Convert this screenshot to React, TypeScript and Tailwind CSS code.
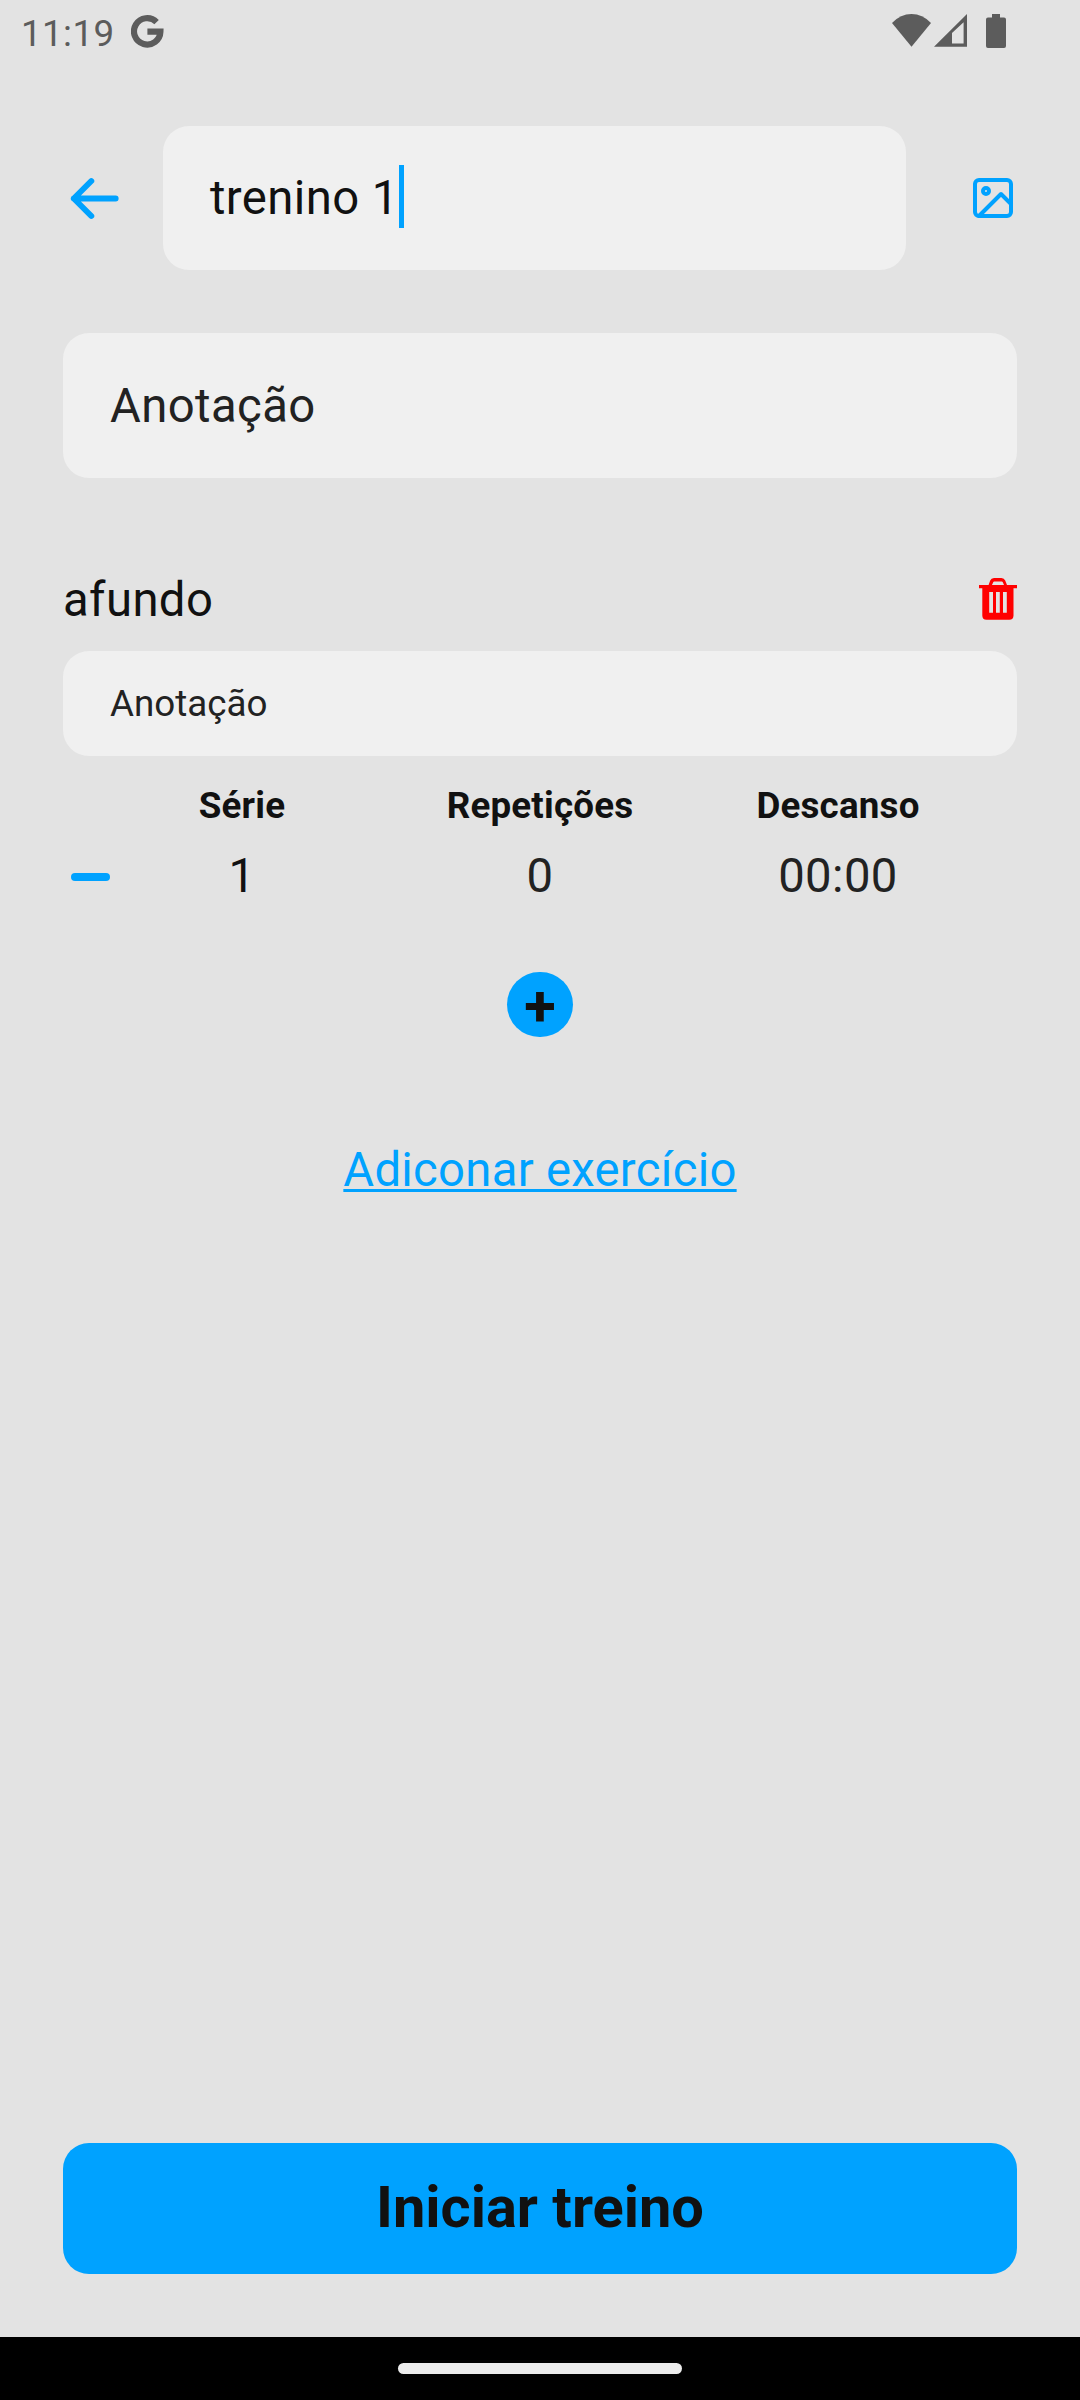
import React from "react";

function StatusBar() {
  return (
    <div className="flex h-[63px] items-start pl-[21px] pr-[74px] text-[#5c5c5c]">
      <span className="mt-3 w-[92px] text-[36.75px] leading-[43px] tracking-[0.4px]">11:19</span>
      <svg className="ml-[18px] mt-[15px] h-[33px] w-[33px]" viewBox="0 0 33 33" fill="none">
        <path d="M25.6 7.1 A13.2 13.2 0 1 0 29.4 16.7 H16.4" stroke="currentColor" strokeWidth="6.2" />
      </svg>
      <div className="ml-auto flex pt-[14px]">
        <svg className="h-[34px] w-[39px]" viewBox="0 0 39 34" fill="currentColor">
          <path d="M0 9 Q8.5 0 19.5 0 T39 9 L19.5 32.8 Z" />
        </svg>
        <svg className="ml-[3px] h-[34px] w-[33px]" viewBox="0 0 33 34" fill="currentColor">
          <path fillRule="evenodd" d="M33 0 V32.8 H0 Z M18 19 V29.4 H29.6 V8.2 Z" />
        </svg>
        <svg className="ml-[19px] h-[34px] w-[20px]" viewBox="0 0 20 34" fill="currentColor">
          <path d="M6 0 H14 V3.5 H18 Q20 3.5 20 5.5 V32 Q20 34 18 34 H2 Q0 34 0 32 V5.5 Q0 3.5 2 3.5 H6 Z" />
        </svg>
      </div>
    </div>
  );
}

function ArrowLeftIcon() {
  return (
    <svg className="h-[63px] w-[63px] text-[#00a2ff]" viewBox="0 0 256 256" fill="none" stroke="currentColor" strokeWidth="24" strokeLinecap="round" strokeLinejoin="round">
      <path d="M214 128 H44 M115 57 L44 128 L115 199" />
    </svg>
  );
}

function ImageIcon() {
  return (
    <svg className="h-12 w-12 text-[#00a2ff]" viewBox="0 0 24 24" fill="none" stroke="currentColor" strokeWidth="2" strokeLinecap="round" strokeLinejoin="round">
      <rect x="3" y="3" width="18" height="18" rx="2" />
      <circle cx="8.5" cy="8.5" r="1.5" />
      <polyline points="21 15 16 10 5 21" />
    </svg>
  );
}

function TrashIcon() {
  return (
    <svg className="h-[42px] w-[38px]" viewBox="0 0 38 42" fill="#ff0000">
      <path
        fillRule="evenodd"
        d="M0 7 H9.6 L11.2 2.6 Q12.2 0 15 0 H22.4 Q25.2 0 26.2 2.6 L28 7 H38 V10.3 H34.5 V37.5 Q34.5 41.7 30.3 41.7 H7.5 Q3.3 41.7 3.3 37.5 V10.3 H0 Z M13 7 H25 L23.8 4.2 Q23.5 3.5 22.8 3.5 H15.2 Q14.5 3.5 14.2 4.2 Z M10.2 14 V34.7 H14 V14 Z M17 14 V34.7 H20.8 V14 Z M24 14 V34.7 H27.8 V14 Z"
      />
    </svg>
  );
}

const columns = [
  { label: "Série", value: "1", tone: "text-[#111111]" },
  { label: "Repetições", value: "0", tone: "text-[#222222]" },
  { label: "Descanso", value: "00:00", tone: "text-[#222222]" },
];

export default function App() {
  return (
    <div className="flex h-[2400px] w-[1080px] flex-col bg-[#e3e3e3] font-[Roboto,sans-serif] text-[47.25px] leading-[56px] text-[#111111]">
      <StatusBar />
      <main className="flex flex-1 flex-col px-[63px] pt-[63px]">
        <header className="flex h-36 items-center">
          <ArrowLeftIcon />
          <div className="ml-[37px] flex h-36 w-[743px] items-center rounded-[26px] bg-[#f0f0f0] pl-[47px]">
            <span className="tracking-[0.4px]">trenino 1</span>
            <span className="mb-[3px] h-[63px] w-[5px] bg-[#00a2ff]" />
          </div>
          <div className="ml-auto">
            <ImageIcon />
          </div>
        </header>

        <div className="mt-[63px] flex h-[145px] items-center rounded-[26px] bg-[#f0f0f0] pl-[47px] tracking-[0.4px] text-[#222222]">Anotação</div>

        <section className="mt-[93px] flex flex-col">
          <div className="flex h-14 items-center justify-between">
            <h2 className="pt-0.5 tracking-[0.4px]">afundo</h2>
            <TrashIcon />
          </div>
          <div className="mt-6 flex h-[105px] items-center rounded-[26px] bg-[#f0f0f0] pl-[47px] text-[36.75px] text-[#222222]">Anotação</div>

          <div className="mt-7 grid grid-cols-3 px-[30px] text-center text-[36.75px] leading-[44px] font-bold tracking-[0.2px]">
            {columns.map((c) => (
              <span key={c.label}>{c.label}</span>
            ))}
          </div>
          <div className="mt-5 flex h-14 items-center">
            <div className="ml-2 mt-[1px] h-2 w-[39px] rounded-full bg-[#00a2ff]" />
            <div className="-ml-[17px] grid w-[894px] shrink-0 grid-cols-3 text-center tracking-[0.4px]">
              {columns.map((c) => (
                <span key={c.label} className={c.tone}>{c.value}</span>
              ))}
            </div>
          </div>

          <button className="mt-[68px] flex h-[65px] w-[66px] items-center justify-center self-center rounded-full bg-[#00a2ff] pt-[3px] text-[57.75px] leading-[62px] font-bold">
            +
          </button>
        </section>

        <a className="mt-[105px] self-center tracking-[0.27px] text-[#00a2ff] underline decoration-[2.5px] underline-offset-[3px]">Adiconar exercício</a>

        <button className="mt-auto mb-[63px] flex h-[131px] items-center justify-center rounded-[26px] bg-[#00a2ff] pb-[3px] text-[57.75px] font-bold">
          Iniciar treino
        </button>
      </main>
      <div className="flex h-[63px] items-center justify-center bg-black">
        <div className="h-[11px] w-[284px] rounded-full bg-[#ececec]" />
      </div>
    </div>
  );
}
